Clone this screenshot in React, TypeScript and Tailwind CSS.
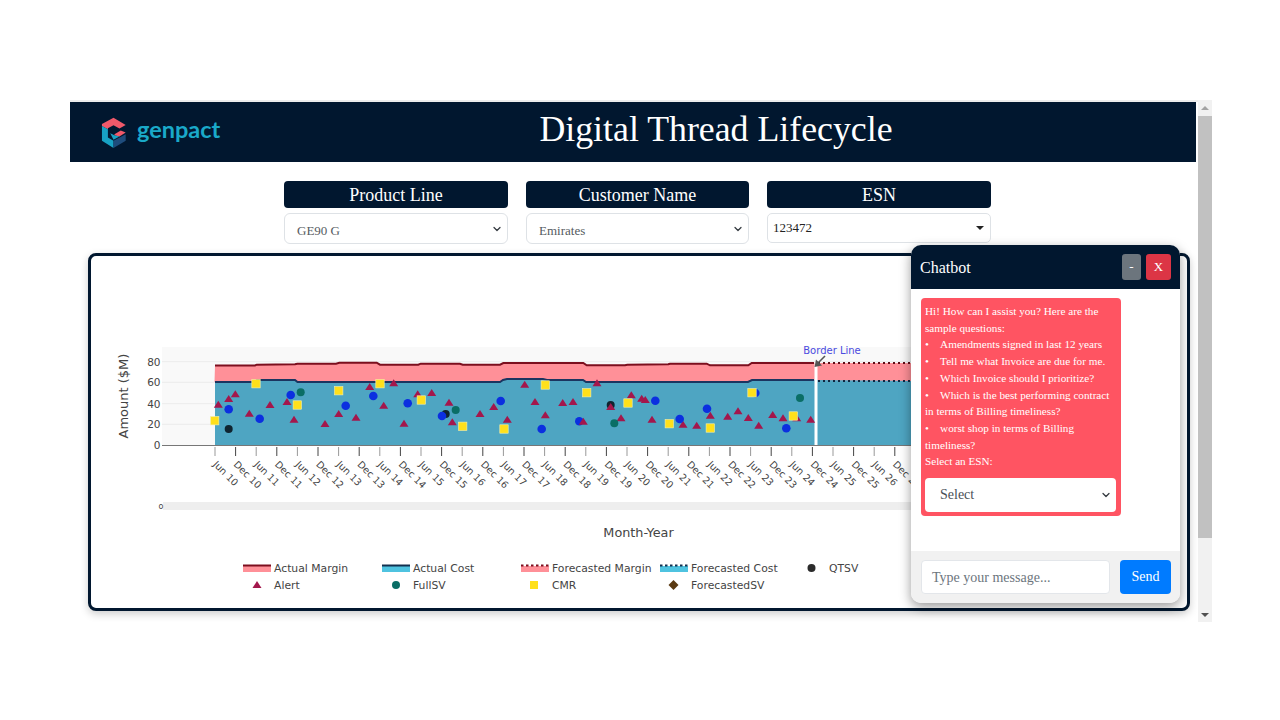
import React from "react"
import { ChevronDown } from "lucide-react"

const serif = "font-['Liberation_Serif',serif]"

const filters = [
    { label: "Product Line", value: "GE90 G", width: "w-[224px]" },
    { label: "Customer Name", value: "Emirates", width: "w-[223px]" },
]

const tickDays = [10, 11, 12, 13, 14, 15, 16, 17, 18, 19, 20, 21, 22, 23, 24, 25, 26]
const ticks = tickDays.flatMap((d) => [`Jun ${d}`, `Dec ${d}`])

const alerts = [
    [218.3, 404.7], [228.7, 399], [235.3, 394.3], [249.3, 413.7], [270, 405], [287, 402], [294, 419.7], [325, 424],
    [338.7, 414], [356, 417.7], [369.7, 387], [383.7, 405.7], [393.7, 383.3], [404, 423.7], [417.7, 394.3], [431.7, 393],
    [449, 402.7], [452.3, 422.3], [480, 414], [493.7, 407], [507.3, 419.7], [524.7, 384.7], [535, 402], [545.3, 415.3],
    [562.7, 403], [573, 402], [597, 383.3], [621, 418.3], [631.3, 395.3], [641.7, 398.7], [645.3, 400], [652, 419.7],
    [683, 424.7], [696.7, 425.7], [710.3, 415.7], [727.7, 416.7], [738, 411.3], [748.3, 418], [758.7, 425.7], [772.7, 415],
    [783, 418.3], [796.7, 418.3], [810.7, 419.7],
]
const blues = [
    [228.7, 409.3], [259.7, 418.7], [290.7, 395], [345.7, 405.7], [373.3, 396], [407.7, 403.3], [442, 416], [500.7, 401],
    [541.7, 429], [579.3, 421.3], [655.3, 400.7], [679.7, 419], [707, 408.7], [755.3, 393], [786.3, 428.3],
]
const teals = [[300.7, 392.3], [455.7, 410], [614.3, 423.3], [800, 398]]
const blacks = [[228.7, 429], [445.7, 414], [610.7, 405]]
const yellows = [
    [214.7, 420.7], [256, 383.7], [297.3, 405], [338.7, 390.7], [380, 383.7], [421.3, 400], [462.7, 426.3], [504, 429],
    [545.3, 385], [586.7, 392.7], [628, 403], [669.3, 423.7], [710.3, 428], [752, 392.7], [793.3, 416],
]

const marginLine = "215,365.5 255,365.5 256.7,364.7 295,364.3 297.3,363.7 336,363.7 339.3,362.7 376.7,362.7 380,364.7 418.3,364.7 420.7,363.7 460,363.7 462.7,364.7 500,364.7 503.3,363 583.3,363 586.7,365.3 625,365.3 627.3,364.7 668.3,364.3 670,363.7 706.7,363.7 710,365.3 748.3,365.3 751.7,363 814,363"
const costLine = "215,382 255,382 257,380 295,380 297.5,382 500,382 503,380 507,379 543,379 547,380 583,380 586,382 748,382 752,380 814,380"

function Triangle({ x, y }: { x: number; y: number }) {
    return <polygon points={`${x - 4.5},${y + 3} ${x + 4.5},${y + 3} ${x},${y - 4}`} fill="#a3174c" />
}

function Chart() {
    return (
        <svg className="block w-full h-full" viewBox="91 256 1096 352" fontFamily="'DejaVu Sans', sans-serif">
            <rect x="162" y="347" width="760" height="98" fill="#f9f9f9" />
            {[361.7, 382.3, 403.7, 424.3].map((y) => (
                <line key={y} x1="162" x2="922" y1={y} y2={y} stroke="#ececec" />
            ))}
            <polygon points={`${marginLine} 922,363 922,381 214.5,382`} fill="#ff9098" />
            <polygon points={`${costLine} 922,381 922,445 215,445`} fill="#4ea5c2" />
            <polyline points={marginLine} fill="none" stroke="#7c0f1e" strokeWidth="2" />
            <polyline points={costLine} fill="none" stroke="#1b3560" strokeWidth="2" />
            <line x1="818" x2="922" y1="363" y2="363" stroke="#5c0a14" strokeWidth="2" strokeDasharray="2 3" />
            <line x1="818" x2="922" y1="381" y2="381" stroke="#10253f" strokeWidth="2" strokeDasharray="2 3" />
            <rect x="814.5" y="363" width="3" height="82" fill="#ffffff" />
            <line x1="162" x2="922" y1="445.5" y2="445.5" stroke="#777777" />

            {[["80", 361.7], ["60", 382.3], ["40", 403.7], ["20", 424.3], ["0", 445.3]].map(([t, y]) => (
                <text key={t} x="160.5" y={Number(y) + 4} textAnchor="end" fontSize="10.5" fill="#444444">{t}</text>
            ))}
            <text x="128" y="396" textAnchor="middle" fontSize="13" fill="#444444" transform="rotate(-90 128 396)">Amount ($M)</text>

            {ticks.map((t, i) => {
                const x = 215 + i * 20.6
                return (
                    <g key={t}>
                        <line x1={x} x2={x} y1="447" y2="456" stroke={i % 2 ? "#444444" : "#999999"} />
                        <text x={x - 2.5} y="465" fontSize="9.7" fill="#444444" transform={`rotate(45 ${x - 2.5} 465)`}>{t}</text>
                    </g>
                )
            })}

            {alerts.map(([x, y], i) => <Triangle key={i} x={x} y={y} />)}
            {blacks.map(([x, y], i) => <circle key={i} cx={x} cy={y} r="4" fill="#0f2430" />)}
            {blues.map(([x, y], i) => <circle key={i} cx={x} cy={y} r="4.3" fill="#0b2fe0" />)}
            {teals.map(([x, y], i) => <circle key={i} cx={x} cy={y} r="4" fill="#0a6e66" />)}
            <Triangle x={610.7} y={407} />
            <Triangle x={583.3} y={421.7} />
            {yellows.map(([x, y], i) => (
                <rect key={i} x={x - 4.2} y={y - 4.2} width="8.4" height="8.4" fill="#ffe01b" stroke="#f3efb0" strokeWidth="0.6" />
            ))}

            <text x="832" y="354" textAnchor="middle" fontSize="10" fill="#4a4ae0">Border Line</text>
            <line x1="825" y1="356" x2="817" y2="364" stroke="#555555" strokeWidth="1.6" />
            <polygon points="814.5,367 816,359.5 822,365.5" fill="#555555" />

            <rect x="163" y="502" width="760" height="8" fill="#eeeeee" />
            <text x="161" y="509" textAnchor="middle" fontSize="8" fill="#444444">o</text>
            <text x="638.5" y="537" textAnchor="middle" fontSize="12.8" fill="#444444">Month-Year</text>

            <rect x="243" y="566" width="28" height="6" fill="#ff9098" />
            <line x1="243" x2="271" y1="565.5" y2="565.5" stroke="#7c0f1e" strokeWidth="2" />
            <rect x="382" y="566" width="28" height="6" fill="#4fc3e0" />
            <line x1="382" x2="410" y1="565.5" y2="565.5" stroke="#12304f" strokeWidth="2" />
            <rect x="521" y="566" width="28" height="6" fill="#ff9098" />
            <line x1="521" x2="549" y1="565.5" y2="565.5" stroke="#7c0f1e" strokeWidth="2" strokeDasharray="2.5 2.5" />
            <rect x="660" y="566" width="28" height="6" fill="#4fc3e0" />
            <line x1="660" x2="688" y1="565.5" y2="565.5" stroke="#12304f" strokeWidth="2" strokeDasharray="2.5 2.5" />
            <circle cx="811.5" cy="568" r="4" fill="#2b2b2b" />
            <polygon points="252.5,588 261.5,588 257,581" fill="#a3174c" />
            <circle cx="396" cy="585" r="4" fill="#0a6e66" />
            <rect x="530" y="581" width="8" height="8" fill="#ffe01b" />
            <polygon points="673.5,580 678.5,585 673.5,590 668.5,585" fill="#5a3a12" />

            {[["Actual Margin", 274, 572], ["Actual Cost", 413, 572], ["Forecasted Margin", 552, 572], ["Forecasted Cost", 691, 572], ["QTSV", 829, 572],
              ["Alert", 274, 589], ["FullSV", 413, 589], ["CMR", 552, 589], ["ForecastedSV", 691, 589]].map(([t, x, y]) => (
                <text key={String(t)} x={x} y={y} fontSize="10.8" fill="#444444">{t}</text>
            ))}
        </svg>
    )
}

function Logo() {
    return (
        <div className="flex items-center gap-[10px]">
            <svg width="27" height="33" viewBox="120 60 80 100">
                <path d="M125 84 L160 65 L197 87 L178 98 L160 88 L143 97 L143 100 L125 90 Z" fill="#f0596a" />
                <path d="M125 90 L143 100 L143 125 L160 135 L160 157 L125 135 Z" fill="#17a2c4" />
                <path d="M160 135 L197 115 L197 135 L160 157 Z" fill="#1e4c7c" />
                <path d="M163 115 L182 104 L197 110 L178 122 L163 118 Z" fill="#f0596a" />
                <path d="M150 112 L163 118 L178 122 L160 132 Z" fill="#17a2c4" />
            </svg>
            <span className="font-['Lato',sans-serif] text-[23.5px] font-bold leading-none text-[#1aa9c9] -mt-[5px]">genpact</span>
        </div>
    )
}

function ChatWindow() {
    return (
        <div className={`absolute left-[841px] top-[145px] w-[269px] h-[358px] flex flex-col rounded-[10px] overflow-hidden bg-white shadow-[0_4px_12px_rgba(0,0,0,0.4)] ${serif}`}>
            <div className="h-[44px] shrink-0 flex items-center justify-between bg-[#01172f] pl-[9px] pr-[9px]">
                <span className="mt-[1px] text-[16px] text-white">Chatbot</span>
                <div className="flex gap-[5px]">
                    <button className="w-[19px] h-[26px] rounded-[3px] bg-[#6c757d] text-white text-[13px]">-</button>
                    <button className="w-[25px] h-[26px] rounded-[3px] bg-[#dc3545] text-white text-[13px]">X</button>
                </div>
            </div>
            <div className="flex-1 pl-[10px] pr-[9px] pt-[9px]">
                <div className="w-[200px] h-[218px] rounded-[4px] bg-[#ff5462] pl-[4px] pr-[5px] pt-[5px] text-[11.2px] leading-[16.7px] text-white">
                    <div>Hi! How can I assist you? Here are the sample questions:</div>
                    {["Amendments signed in last 12 years", "Tell me what Invoice are due for me.", "Which Invoice should I prioritize?", "Which is the best performing contract in terms of Billing timeliness?", "worst shop in terms of Billing timeliness?"].map((q) => (
                        <div key={q}>{`•\u00a0\u00a0\u00a0\u00a0${q}`}</div>
                    ))}
                    <div>Select an ESN:</div>
                    <div className="mt-[8px] h-[34px] flex items-center justify-between rounded-[4px] bg-white pl-[15px] pr-[4px] text-[14px] text-[#495057]">
                        <span className="mt-[1px]">Select</span>
                        <ChevronDown size={12} strokeWidth={2.5} color="#343a40" />
                    </div>
                </div>
            </div>
            <div className="h-[52px] shrink-0 flex items-center gap-[10px] bg-[#f1f1f1] pl-[10px] pr-[9px]">
                <div className="w-[189px] h-[34px] flex items-center rounded-[4px] border border-[#e3e6ea] bg-white pl-[10px] text-[14px] text-[#6c757d]">Type your message...</div>
                <button className="w-[51px] h-[34px] rounded-[4px] bg-[#007bff] pb-[1px] text-[14px] text-white">Send</button>
            </div>
        </div>
    )
}

export default function App() {
    return (
        <div className="w-[1280px] h-[720px] overflow-hidden bg-white pt-[100px] pl-[70px]">
            <div className="flex w-[1142px] h-[522px]">
                <div className="relative w-[1128px]">
                    <div className="h-[2px] bg-[#ececec]" />
                    <div className="mr-[2px] h-[60px] flex items-center bg-[#01172f]">
                        <div className="w-[166px] shrink-0 pl-[30px]">
                            <Logo />
                        </div>
                        <h1 className={`flex-1 pb-[4px] text-center text-[35.8px] text-white ${serif}`}>Digital Thread Lifecycle</h1>
                    </div>

                    <div className={`flex gap-[18px] mt-[19px] pl-[214px] ${serif}`}>
                        {filters.map((f) => (
                            <div key={f.label} className={f.width}>
                                <div className="h-[27px] flex items-center justify-center rounded-[4px] bg-[#01172f] pt-[2px] text-[18px] text-white">{f.label}</div>
                                <div className="mt-[5px] h-[31px] flex items-center justify-between rounded-[6px] border border-[#dee2e6] bg-white pl-[12px] pr-[4px] text-[13px] text-[#555b61]">
                                    <span className="mt-[4px]">{f.value}</span>
                                    <ChevronDown size={12} strokeWidth={2.5} color="#343a40" />
                                </div>
                            </div>
                        ))}
                        <div className="w-[224px]">
                            <div className="h-[27px] flex items-center justify-center rounded-[4px] bg-[#01172f] pt-[2px] text-[18px] text-white">ESN</div>
                            <div className="mt-[5px] h-[30px] flex items-center justify-between rounded-[5px] border border-[#dee2e6] bg-white pl-[5px] pr-[6px] text-[13px] text-[#222222]">
                                123472
                                <span className="w-0 h-0 border-x-[4px] border-x-transparent border-t-[4px] border-t-[#222222]" />
                            </div>
                        </div>
                    </div>

                    <div className="mt-[9px] ml-[18px] w-[1102px] h-[358px] rounded-[8px] border-[3px] border-[#01172f] bg-white shadow-[0_3px_8px_rgba(0,0,0,0.2)]">
                        <Chart />
                    </div>

                    <ChatWindow />
                </div>

                <div className="w-[14px] flex flex-col items-center bg-[#f1f1f1]">
                    <div className="h-[16px] shrink-0 flex items-center justify-center">
                        <span className="w-0 h-0 border-x-[4px] border-x-transparent border-b-[4px] border-b-[#a3a3a3]" />
                    </div>
                    <div className="w-full h-[422px] bg-[#c1c1c1]" />
                    <div className="flex-1" />
                    <div className="h-[14px] shrink-0 flex items-center justify-center">
                        <span className="w-0 h-0 border-x-[4px] border-x-transparent border-t-[4px] border-t-[#505050]" />
                    </div>
                </div>
            </div>
        </div>
    )
}
